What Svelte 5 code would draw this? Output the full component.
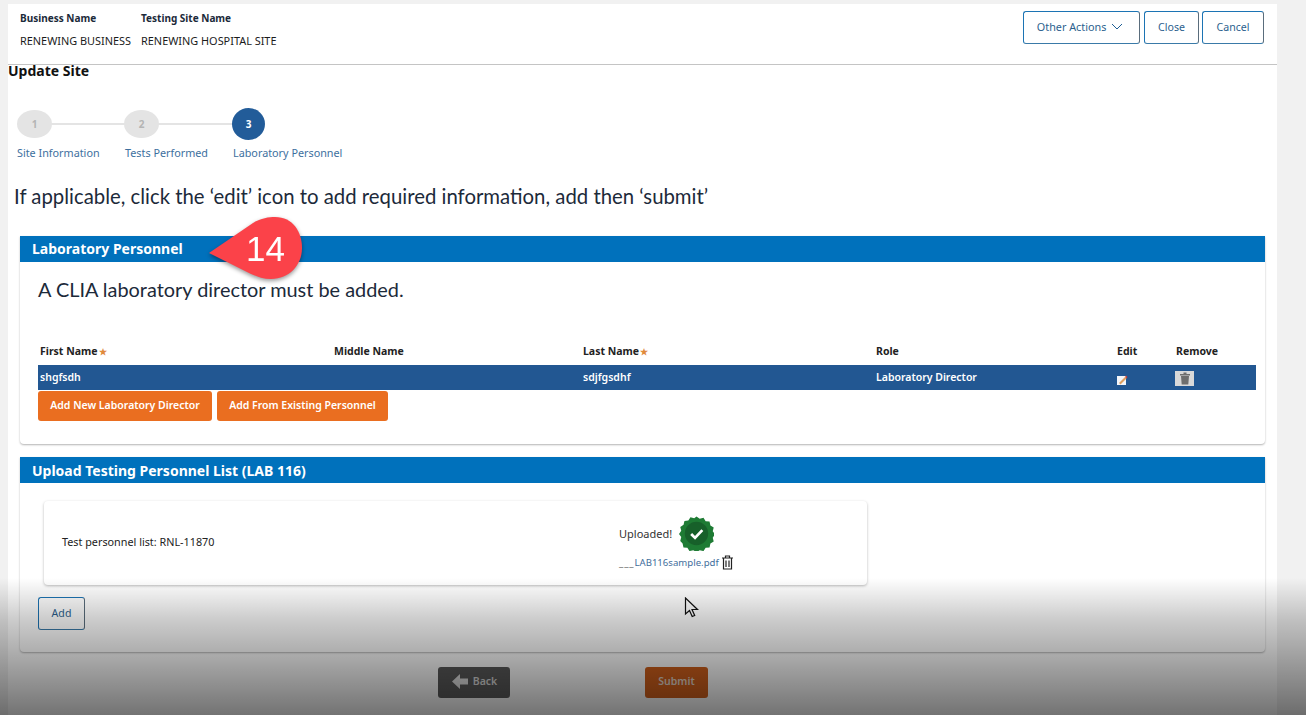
<script>
  const columns = [
    { name: 'First Name', w: 294, req: true },
    { name: 'Middle Name', w: 249 },
    { name: 'Last Name', w: 293, req: true },
    { name: 'Role', w: 241 },
    { name: 'Edit', w: 59 },
    { name: 'Remove', w: 80 }
  ];
</script>

<div class="page">
  <header class="top">
    <div class="site-info">
      <div class="pair"><b>Business Name</b><span>RENEWING BUSINESS</span></div>
      <div class="pair"><b>Testing Site Name</b><span>RENEWING HOSPITAL SITE</span></div>
    </div>
    <div class="actions">
      <button class="outline other">Other Actions
        <svg width="12" height="7" viewBox="0 0 12 7"><path d="M1 1l5 5 5-5" fill="none" stroke="#1f5f95" stroke-width="1"/></svg>
      </button>
      <button class="outline close">Close</button>
      <button class="outline cancel">Cancel</button>
    </div>
  </header>

  <h1>Update Site</h1>

  <div class="stepper">
    <div class="step s1"><i class="dot">1</i><span>Site Information</span></div>
    <div class="step s2"><i class="dot">2</i><span>Tests Performed</span></div>
    <div class="step s3"><i class="dot on">3</i><span>Laboratory Personnel</span></div>
  </div>

  <p class="lead">If applicable, click the ‘edit’ icon to add required information, add then ‘submit’</p>

  <section class="panel first">
    <h2>Laboratory Personnel</h2>
    <p class="notice">A CLIA laboratory director must be added.</p>
    <div class="thead">
      {#each columns as c}
        <div class="cell" style="width:{c.w}px">{c.name}{#if c.req}<em>★</em>{/if}</div>
      {/each}
    </div>
    <div class="row">
      <div class="cell text" style="width:294px">shgfsdh</div>
      <div class="cell text" style="width:249px"></div>
      <div class="cell text" style="width:293px">sdjfgsdhf</div>
      <div class="cell text" style="width:241px">Laboratory Director</div>
      <div class="cell" style="width:59px">
        <svg class="edit" width="11" height="10" viewBox="0 0 11 10">
          <rect x="0" y="1" width="9" height="9" fill="#f4f6fa"/>
          <path d="M2 8l6-6 1.500 1.500-6 6z" fill="#e0a060"/>
          <path d="M8 2l1-1.500 1.500 1.500-1 1.500z" fill="#c9463c"/>
        </svg>
      </div>
      <div class="cell" style="width:80px">
        <span class="trash-btn">
          <svg width="12" height="13" viewBox="0 0 12 13"><path d="M1 2h10v1.500H1zM4.500 .5h3V2h-3zM2 4h8l-.7 8.500H2.700z" fill="#6e6e6e"/></svg>
        </span>
      </div>
    </div>
    <div class="row-actions">
      <button class="orange">Add New Laboratory Director</button>
      <button class="orange">Add From Existing Personnel</button>
    </div>
  </section>

  <section class="panel second">
    <h2>Upload Testing Personnel List (LAB 116)</h2>
    <div class="card">
      <div class="card-label">Test personnel list: RNL-11870</div>
      <div class="card-status">
        <div class="uploaded">
          <span>Uploaded!</span>
          <svg width="36" height="36" viewBox="0 0 36 36">
            <path d="M18 .5l3.300 2.400 3.900-1 2.200 3.400 4 .4.900 4 3.400 2.100-1 3.900 2.300 3.300-2.300 3.300 1 3.900-3.400 2.100-.9 4-4 .4-2.200 3.400-3.900-1-3.300 2.400-3.300-2.400-3.900 1-2.200-3.400-4-.4-.9-4L1.300 25.600l1-3.900L0 18.400l2.300-3.300-1-3.900 3.400-2.100.9-4 4-.4 2.200-3.400 3.900 1z" fill="#1e7b34"/>
            <circle cx="18" cy="18" r="12" fill="#17602a"/>
            <path d="M12.500 18.500l4 4 7.500-8" fill="none" stroke="#fff" stroke-width="2.800"/>
          </svg>
        </div>
        <div class="file">
          <span><span class="under">___</span>LAB116sample.pdf</span>
          <svg width="13" height="15" viewBox="0 0 13 15"><path d="M1 3h11M4.500 3V1h4v2M2.500 3v11h8V3M5 5.500v6.500M8 5.500v6.500" fill="none" stroke="#222" stroke-width="1.200"/></svg>
        </div>
      </div>
    </div>
    <button class="outline add">Add</button>
  </section>

  <div class="footer">
    <button class="back">
      <svg width="16" height="15" viewBox="0 0 16 15"><path d="M8 0v4.500h8v6H8V15L0 7.500z" fill="#e2e2e2"/></svg>
      Back
    </button>
    <button class="submit">Submit</button>
  </div>
</div>

<div class="callout">
  <svg width="100" height="70" viewBox="0 0 100 70">
    <path d="M0 38 L44 8 C52 3 60 2 66 2 C84 2 93 17 93 33 C93 50 80 64 62 64 C55 64 49 62 42 59 Z" fill="#fb4249"/>
  </svg>
  <span>14</span>
</div>

<svg class="cursor" width="15" height="22" viewBox="0 0 15 22">
  <path d="M1.500 1v16l4-3.500 2.700 6 2.500-1-2.700-6h5.500z" fill="#fff" stroke="#111" stroke-width="1.200"/>
</svg>

<div class="shade"></div>

<style>
  :global(body) {
    margin: 0;
    background: #f1f1f1;
    font-family: "Noto Sans", "Open Sans", sans-serif;
    overflow: hidden;
  }
  .page {
    box-sizing: border-box;
    width: 1269px;
    height: 711px;
    margin: 4px 0 0 8px;
    background: #fff;
    color: #1b1b1b;
    overflow: hidden;
  }
  .top {
    display: flex;
    justify-content: space-between;
    height: 61px;
    box-sizing: border-box;
    border-bottom: 1px solid #c4c4c4;
    padding: 7px 13px 0 12px;
  }
  .site-info { display: flex; gap: 10px; }
  .pair { display: flex; flex-direction: column; font-size: 10.900px; line-height: 14px; gap: 9px; color: #1b1b1b; }
  .pair b { font-size: 10px; font-weight: 700; color: #1b2a3a; }
  .actions { display: flex; gap: 3px; align-items: flex-start; }
  button { font-family: inherit; cursor: pointer; }
  .outline {
    box-sizing: border-box;
    height: 33px;
    background: transparent;
    border: 1.500px solid #1c74b4;
    border-right-color: #5a6d7c;
    border-bottom-color: #3a7aa8;
    border-radius: 3px;
    color: #2c5f8e;
    font-size: 10.600px;
    padding: 0 0 2px;
  }
  .other { width: 117px; margin-right: 1px; padding-right: 3px; font-size: 10.800px; }
  .other svg { margin-left: 2px; vertical-align: 1px; }
  .close { width: 55px; }
  .cancel { width: 62px; }
  h1 { margin: -1px 0 0; font-size: 14px; line-height: 14px; font-weight: 700; color: #111; }
  .stepper { display: flex; margin: 30px 0 0 9px; height: 52px; }
  .step { position: relative; display: flex; flex-direction: column; align-items: flex-start; }
  .s1 { width: 108px; }
  .s2 { width: 108px; }
  .s2 .dot, .s3 .dot { margin-left: -1px; }
  .s1::after, .s2::after {
    content: "";
    position: absolute;
    left: 30px;
    width: 80px;
    top: 15px;
    height: 2px;
    background: #e4e4e4;
  }
  .dot {
    position: relative;
    z-index: 1;
    box-sizing: border-box;
    width: 35px;
    height: 28px;
    margin-top: 2px;
    border-radius: 50%;
    background: #e4e4e4;
    color: #b4b4b4;
    font-style: normal;
    font-weight: 700;
    font-size: 10px;
    display: flex;
    align-items: center;
    justify-content: center;
  }
  .dot.on { width: 33px; height: 32px; margin-top: 0; background: #225c99; color: #fff; }
  .step span { font-size: 10.800px; color: #3d6f9e; margin-top: 8px; line-height: 14px; white-space: nowrap; }
  .dot.on + span { margin-top: 6px; }
  .lead, .notice { font-family: Lato, "Noto Sans", sans-serif; line-height: 26px; color: #1c2a3a; white-space: nowrap; }
  .lead { margin: 23px 0 0 6px; font-size: 20.350px; }
  .panel {
    box-sizing: border-box;
    width: 1245px;
    margin-left: 12px;
    background: #fff;
    border-radius: 0 0 4px 4px;
    box-shadow: 0 1px 2px rgba(0,0,0,.3);
  }
  .first { height: 208px; margin-top: 27px; }
  .second { height: 195px; margin-top: 13px; }
  h2 {
    margin: 0;
    height: 26px;
    line-height: 27px;
    padding-left: 12px;
    background: #0071bc;
    color: #fff;
    font-size: 14px;
    font-weight: 700;
  }
  .first h2 { line-height: 25px; }
  .notice { margin: 14px 0 0 18px; font-size: 19.900px; }
  .thead { display: flex; margin: 42px 0 0 20px; font-size: 10.500px; font-weight: 700; line-height: 14px; color: #222; }
  .thead em { color: #e08a3c; font-style: normal; font-size: 9px; margin-left: 1px; }
  .row {
    display: flex;
    align-items: center;
    box-sizing: border-box;
    height: 25px;
    width: 1218px;
    margin: 6px 0 1px 18px;
    padding-left: 2px;
    background: #225792;
    color: #fff;
    font-size: 10.500px;
    font-weight: 600;
  }
  .cell { box-sizing: border-box; flex: none; }
  .text { padding-bottom: 2px; }
  .edit { display: block; margin-top: 5px; }
  .trash-btn { display: inline-flex; align-items: center; justify-content: center; width: 19px; height: 15px; margin-top: 3px; margin-left: -1px; background: #d9d9d9; }
  .row-actions { display: flex; gap: 5px; margin-left: 18px; }
  .orange {
    box-sizing: border-box;
    height: 30px;
    border: 0;
    border-radius: 3px;
    background: #ea6e20;
    color: #fff;
    font-size: 10.500px;
    font-weight: 600;
    padding: 0 0 2px;
  }
  .orange:first-child { width: 174px; }
  .orange:last-child { width: 171px; }
  .card {
    display: flex;
    align-items: center;
    box-sizing: border-box;
    width: 823px;
    height: 84px;
    margin: 18px 0 0 24px;
    border-radius: 4px;
    background: #fff;
    box-shadow: 0 1px 3px rgba(0,0,0,.28);
    padding-left: 18px;
  }
  .card-label { width: 557px; font-size: 10.800px; color: #222; padding-bottom: 4px; }
  .uploaded { display: flex; align-items: center; gap: 7px; font-size: 11px; color: #333; }
  .uploaded svg { width: 35px; height: 35px; }
  .file { display: flex; align-items: center; gap: 2px; font-size: 9.600px; color: #3f6e9c; margin-top: 4px; }
  .under { color: #555; letter-spacing: .9px; }
  .add { display: block; width: 47px; margin: 12px 0 0 18px; color: #2c5f8e; }
  .footer { position: relative; display: flex; margin: 15px 0 0 430px; gap: 135px; }
  .back {
    display: flex;
    align-items: center;
    justify-content: center;
    gap: 5px;
    width: 72px;
    height: 31px;
    padding: 0 0 3px 1px;
    border: 0;
    border-radius: 3px;
    background: #5a5a5a;
    color: #dcdcdc;
    font-size: 10.500px;
    font-weight: 600;
  }
  .submit {
    width: 63px;
    height: 31px;
    padding: 0 0 3px;
    border: 0;
    border-radius: 3px;
    background: #d0601c;
    color: #e6d8cc;
    font-size: 10.500px;
    font-weight: 600;
  }
  .callout {
    position: absolute;
    left: 209px;
    top: 215px;
    width: 100px;
    height: 70px;
    filter: drop-shadow(0 2px 2px rgba(0,0,0,.4));
  }
  .callout svg { display: block; }
  .callout span {
    position: absolute;
    left: 37px;
    top: 13px;
    font-family: "Liberation Sans", sans-serif;
    font-size: 35px;
    line-height: 42px;
    color: #fff;
  }
  .cursor { position: absolute; left: 684px; top: 597px; }
  .shade {
    position: absolute;
    left: 0;
    right: 0;
    top: 578px;
    height: 137px;
    background: linear-gradient(to bottom, rgba(0,0,0,0), rgba(0,0,0,.2) 30%, rgba(0,0,0,.55));
    pointer-events: none;
  }
</style>
